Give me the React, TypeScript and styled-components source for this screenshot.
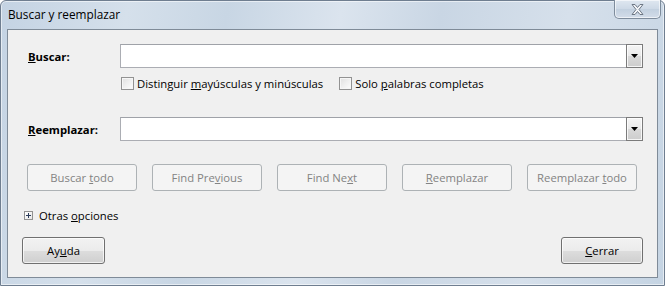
import React from 'react';
import styled, {createGlobalStyle} from 'styled-components';

const GlobalStyle = createGlobalStyle`
  html, body {
    margin: 0;
    padding: 0;
    background: #ffffff;
  }
  body {
    font-family: "Open Sans", "Noto Sans", sans-serif;
    font-size: 11.3px;
    color: #000;
  }
`;

const Frame = styled.div`
  box-sizing: border-box;
  width: 665px;
  height: 286px;
  display: flex;
  flex-direction: column;
  padding: 0 6px 7px 6px;
  border: 1px solid #6f7e90;
  border-radius: 6px 6px 0 0;
  background: linear-gradient(
    100deg,
    #c4d3e3 0%,
    #d5e0eb 18%,
    #c8d6e4 32%,
    #dbe4ee 48%,
    #c9d6e4 62%,
    #d6e0eb 80%,
    #c5d4e3 100%
  );
  box-shadow: inset 0 0 0 1px rgba(255, 255, 255, 0.55);
`;

const TitleBar = styled.div`
  height: 28px;
  display: flex;
  align-items: flex-start;
  justify-content: space-between;
  padding-left: 1px;
`;

const Title = styled.span`
  font-size: 11.8px;
  line-height: 27px;
  color: #000;
`;

const CloseButton = styled.div`
  box-sizing: border-box;
  width: 47px;
  height: 19px;
  margin: -1px -3px 0 0;
  display: flex;
  align-items: center;
  justify-content: center;
  border: 1px solid #7e8c9c;
  border-top: none;
  border-radius: 0 0 5px 5px;
  background: linear-gradient(#dfe7f0, #cdd9e6 50%, #c2d0df 51%, #d3dde9);
  box-shadow: inset 0 0 0 1px rgba(255, 255, 255, 0.6);
`;

const Client = styled.div`
  flex: 1;
  display: flex;
  flex-direction: column;
  border: 1px solid #7f8b98;
  background: #f0f0f0;
  padding: 14px 14px 0 20px;
`;

const FieldGrid = styled.div`
  display: grid;
  grid-template-columns: 92px 1fr;
  align-items: center;
`;

const FieldLabel = styled.label`
  font-weight: bold;
`;

const Combo = styled.div`
  box-sizing: border-box;
  height: 24px;
  display: flex;
  justify-content: flex-end;
  border: 1px solid #abadb3;
  border-top-color: #9fa2a8;
  background: #fff;
`;

const DropButton = styled.div`
  box-sizing: border-box;
  width: 17px;
  display: flex;
  align-items: center;
  justify-content: center;
  border: 1px solid #7b7b7b;
  margin: -1px -1px -1px 0;
  background: linear-gradient(#f5f5f5, #e9e9e9 50%, #d9d9d9 51%, #cdcdcd);
  box-shadow: inset 0 0 0 1px rgba(255, 255, 255, 0.8);
`;

const OptionsRow = styled.div<{$offset: number}>`
  grid-column: 2;
  display: flex;
  gap: 16px;
  margin: 7px 0 0 1px;
  margin-bottom: ${p => p.$offset}px;
  height: 16px;
  align-items: center;
`;

const CheckOption = styled.label`
  display: flex;
  align-items: center;
  gap: 3px;
`;

const CheckBox = styled.span`
  box-sizing: border-box;
  width: 13px;
  height: 13px;
  border: 1px solid #929292;
  background: linear-gradient(135deg, #e0e0e0, #f5f5f5 70%, #fdfdfd);
  box-shadow: inset 0 0 0 1px #f6f6f6;
`;

const ButtonRow = styled.div`
  display: flex;
  gap: 15px;
  margin: 23px 0 0 -1px;
`;

const PushButton = styled.button<{$disabled?: boolean; $width: number}>`
  box-sizing: border-box;
  width: ${p => p.$width}px;
  height: 27px;
  padding: 0;
  font-family: inherit;
  font-size: inherit;
  font-weight: 400;
  border-radius: 3px;
  border: 1px solid ${p => (p.$disabled ? '#adb2b5' : '#707070')};
  color: ${p => (p.$disabled ? '#838383' : '#000')};
  background: ${p =>
    p.$disabled
      ? '#f4f4f4'
      : 'linear-gradient(#f2f2f2, #ebebeb 50%, #dddddd 51%, #cfcfcf)'};
  box-shadow: ${p => (p.$disabled ? 'none' : 'inset 0 0 0 1px rgba(255,255,255,0.7)')};
`;

const Expander = styled.div`
  display: flex;
  align-items: center;
  gap: 6px;
  height: 16px;
  margin: 16px 0 0 -4px;
`;

const PlusBox = styled.span`
  box-sizing: border-box;
  width: 9px;
  height: 9px;
  border: 1px solid #919191;
  background: linear-gradient(135deg, #ffffff, #e6e6e6);
  display: flex;
  align-items: center;
  justify-content: center;
`;

const Footer = styled.div`
  display: flex;
  justify-content: space-between;
  margin: 14px 0 0 -6px;
`;

const U = styled.span`
  text-decoration: underline;
  text-underline-offset: 1px;
`;

function Dropdown() {
  return (
    <Combo>
      <DropButton>
        <svg width="7" height="4" viewBox="0 0 7 4">
          <polygon points="0,0 7,0 3.5,4" fill="#000" />
        </svg>
      </DropButton>
    </Combo>
  );
}

export default function App() {
  return (
    <>
      <GlobalStyle />
      <Frame>
        <TitleBar>
          <Title>Buscar y reemplazar</Title>
          <CloseButton>
            <svg width="13" height="11" viewBox="0 0 13 11">
              <polygon
                points="1,0.5 4,0.5 6.5,3.5 9,0.5 12,0.5 8,5.5 12,10.5 9,10.5 6.5,7.5 4,10.5 1,10.5 5,5.5"
                fill="#f4f6f9"
                stroke="#6d7784"
                strokeWidth="1"
                strokeLinejoin="round"
              />
            </svg>
          </CloseButton>
        </TitleBar>
        <Client>
          <FieldGrid>
            <FieldLabel>
              <U>B</U>uscar:
            </FieldLabel>
            <Dropdown />
            <OptionsRow $offset={26}>
              <CheckOption>
                <CheckBox />
                <span>
                  Distinguir <U>m</U>ayúsculas y minúsculas
                </span>
              </CheckOption>
              <CheckOption>
                <CheckBox />
                <span>
                  Solo <U>p</U>alabras completas
                </span>
              </CheckOption>
            </OptionsRow>
            <FieldLabel>
              <U>R</U>eemplazar:
            </FieldLabel>
            <Dropdown />
          </FieldGrid>
          <ButtonRow>
            <PushButton $disabled $width={110}>
              Buscar <U>t</U>odo
            </PushButton>
            <PushButton $disabled $width={110}>
              Find Pre<U>v</U>ious
            </PushButton>
            <PushButton $disabled $width={110}>
              Find Ne<U>x</U>t
            </PushButton>
            <PushButton $disabled $width={110}>
              <U>R</U>eemplazar
            </PushButton>
            <PushButton $disabled $width={110}>
              Reemplazar <U>t</U>odo
            </PushButton>
          </ButtonRow>
          <Expander>
            <PlusBox>
              <svg width="5" height="5" viewBox="0 0 5 5">
                <path d="M0 2.5H5M2.5 0V5" stroke="#2b3c5a" strokeWidth="1" />
              </svg>
            </PlusBox>
            <span>
              Otras <U>o</U>pciones
            </span>
          </Expander>
          <Footer>
            <PushButton $width={83}>
              Ay<U>u</U>da
            </PushButton>
            <PushButton $width={82}>
              <U>C</U>errar
            </PushButton>
          </Footer>
        </Client>
      </Frame>
    </>
  );
}
